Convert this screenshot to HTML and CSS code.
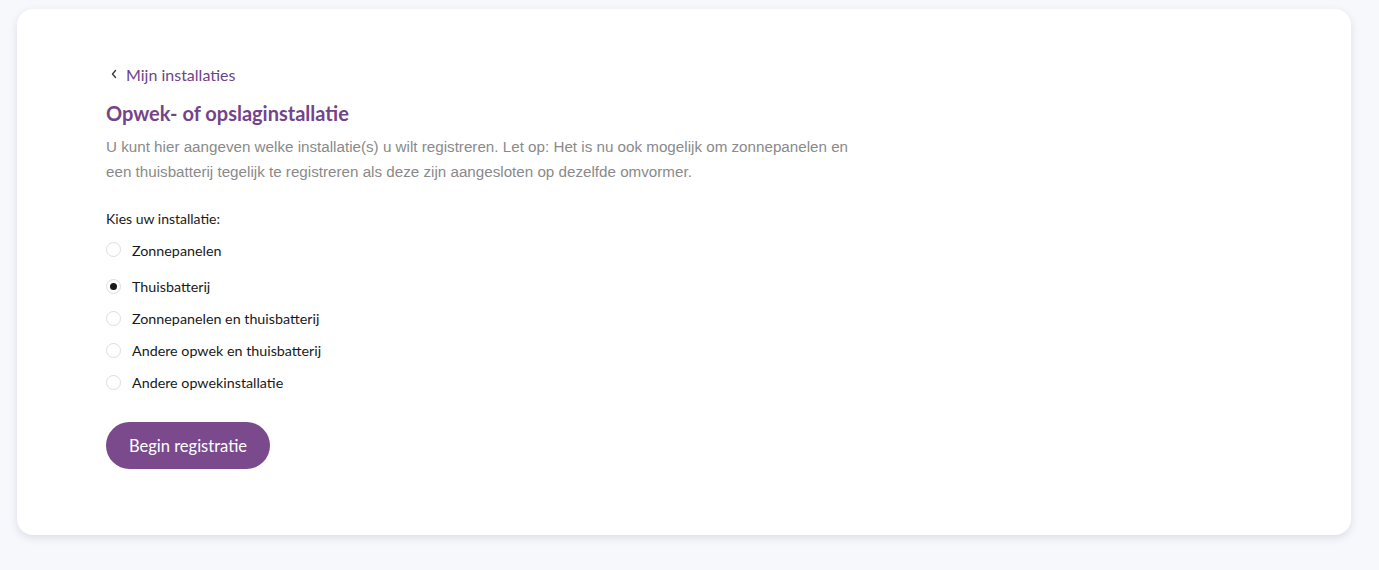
FILE: index.html
```html
<!DOCTYPE html>
<html>
    <head>
        <meta charset="utf-8">
        <title>Opwek- of opslaginstallatie</title>
        <meta name="viewport" content="width=device-width, initial-scale=1">
        <link rel="stylesheet" href="styles.css">
    </head>
    <body>
        <div class="page">
            <div class="card">
                <a class="back-link" href="#">
                    <svg class="back-icon" width="8" height="10" viewBox="0 0 8 10">
                        <path d="M5.5 1.5 L2.5 5 L5.5 8.5" fill="none" stroke="#3b3b3b" stroke-width="1.4" stroke-linecap="round" stroke-linejoin="round"/>
                    </svg>
                    <span>Mijn installaties</span>
                </a>
                <h1 class="title">Opwek- of opslaginstallatie</h1>
                <p class="intro">U kunt hier aangeven welke installatie(s) u wilt registreren. Let op: Het is nu ook mogelijk om zonnepanelen en een thuisbatterij tegelijk te registreren als deze zijn aangesloten op dezelfde omvormer.</p>

                <div class="choice-label">Kies uw installatie:</div>
                <div class="radio-list">
                    <label class="radio-item first">
                        <span class="radio"></span>
                        <span>Zonnepanelen</span>
                    </label>
                    <label class="radio-item">
                        <span class="radio checked"></span>
                        <span>Thuisbatterij</span>
                    </label>
                    <label class="radio-item">
                        <span class="radio"></span>
                        <span>Zonnepanelen en thuisbatterij</span>
                    </label>
                    <label class="radio-item">
                        <span class="radio"></span>
                        <span>Andere opwek en thuisbatterij</span>
                    </label>
                    <label class="radio-item">
                        <span class="radio"></span>
                        <span>Andere opwekinstallatie</span>
                    </label>
                </div>

                <button class="start-btn">Begin registratie</button>
            </div>
        </div>
    </body>
</html>
```

FILE: styles.css
```css
* {
    box-sizing: border-box;
}
body {
    margin: 0px;
    padding: 0px;
    background-color: #f7f8fc;
    font-family: 'Lato', sans-serif;
}

.page {
    padding: 9px 28px 35px 17px;
}

.card {
    background-color: white;
    border-radius: 16px;
    box-shadow: 0 3px 8px rgba(40, 40, 70, 0.12);
    height: 526px;
    padding: 54px 89px 0px 89px;
}

.back-link {
    display: flex;
    align-items: center;
    gap: 8px;
    color: #6f4487;
    text-decoration: none;
    font-size: 16px;
    height: 22px;
    padding-left: 4px;
}

.title {
    margin: 15px 0px 0px 0px;
    font-size: 20px;
    font-weight: 700;
    color: #74448a;
    line-height: 26px;
}

.intro {
    margin: 8px 0px 0px 0px;
    max-width: 760px;
    font-family: 'Liberation Sans', Arial, sans-serif;
    font-size: 15.2px;
    line-height: 25px;
    color: #8a8a8a;
}

.choice-label {
    margin-top: 25px;
    font-size: 14px;
    color: #1a1a1a;
    line-height: 20px;
}

.radio-list {
    display: flex;
    flex-direction: column;
    margin-top: 7px;
}

.radio-item {
    display: flex;
    align-items: center;
    gap: 11px;
    height: 32px;
    font-size: 14.3px;
    color: #1a1a1a;
    cursor: pointer;
}

.radio-item.first {
    height: 34px;
    align-items: flex-start;
    padding-top: 6px;
}

.radio {
    width: 15px;
    height: 15px;
    border-radius: 50%;
    border: 1px solid #dedee3;
    background-color: white;
    display: flex;
    align-items: center;
    justify-content: center;
}

.radio.checked::after {
    content: "";
    width: 7px;
    height: 7px;
    border-radius: 50%;
    background-color: #1a1a1a;
}

.start-btn {
    margin-top: 24px;
    width: 164px;
    height: 47px;
    border: none;
    border-radius: 24px;
    background-color: #7a4a8c;
    color: white;
    font-family: 'Lato', sans-serif;
    font-size: 16.5px;
    cursor: pointer;
}
```
